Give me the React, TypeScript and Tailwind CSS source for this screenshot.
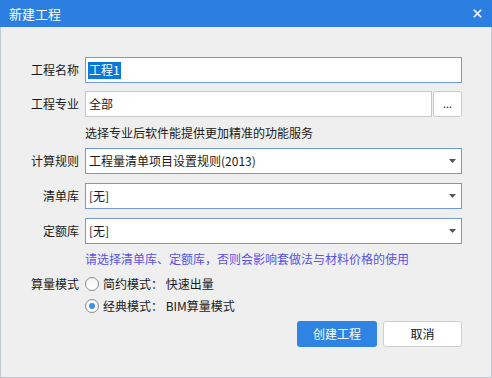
import React from "react";

const font = { fontFamily: '"Noto Sans CJK SC", "Microsoft YaHei", sans-serif' };

function Caret() {
  return (
    <svg width="7" height="4" viewBox="0 0 7 4" className="shrink-0">
      <path d="M0 0H7L3.5 4Z" fill="#555" />
    </svg>
  );
}

function Combo({ value }: { value: string }) {
  return (
    <div className="h-[26px] flex items-center justify-between bg-white border border-[#6f98e0] pl-[3px] pr-[5px]">
      <span className="text-[12px] text-[#1a1a1a] leading-none">{value}</span>
      <Caret />
    </div>
  );
}

function Label({ text }: { text: string }) {
  return <div className="text-right text-[12px] text-[#1a1a1a] leading-none self-center">{text}</div>;
}

function Radio({ checked, label }: { checked?: boolean; label: string }) {
  return (
    <div className="h-[22px] flex items-center gap-[4px]">
      <span className="w-[14px] h-[14px] rounded-full border border-[#8a8a8a] bg-gradient-to-b from-[#f4f4f4] to-white flex items-center justify-center">
        {checked && <span className="w-[6px] h-[6px] rounded-full bg-[#3b8eea]" />}
      </span>
      <span className="text-[12px] text-[#1a1a1a] leading-none">{label}</span>
    </div>
  );
}

export default function App() {
  return (
    <div className="w-[492px] h-[378px] flex flex-col select-none" style={font}>
      {/* title bar */}
      <div className="h-[27px] shrink-0 bg-[#2c7fe1] flex items-center justify-between pl-[9px] pr-[10px]">
        <span className="text-white text-[13px] leading-none">新建工程</span>
        <svg width="9" height="9" viewBox="0 0 9 9">
          <path d="M0.8 0.8L8.2 8.2M8.2 0.8L0.8 8.2" stroke="#fff" strokeWidth="1.6" />
        </svg>
      </div>

      {/* body */}
      <div className="flex-1 bg-[#efefef] border-x border-b border-[#c2c9d2] pt-[30px] pr-[29px]">
        <div className="grid grid-cols-[78px_1fr] gap-x-[6px]">
          <Label text="工程名称" />
          <div className="h-[26px] flex items-center bg-white border border-[#6f98e0] pl-[2px]">
            <span className="h-[17px] flex items-center bg-[#0a78d7] text-white text-[12px] leading-none px-[1px]">工程1</span>
          </div>

          <div className="col-span-2 h-[8px]" />

          <Label text="工程专业" />
          <div className="flex gap-[1px]">
            <div className="flex-1 h-[26px] flex items-center bg-white border border-[#c8c8c8] pl-[3px] text-[12px] text-[#1a1a1a] leading-none">
              全部
            </div>
            <button className="w-[29px] h-[26px] bg-white border border-[#cbcbcb] rounded-[3px] text-[11px] leading-none text-[#222] flex items-center justify-center pb-[2px]">
              ...
            </button>
          </div>

          <div />
          <div className="h-[31px] flex items-center text-[12px] text-[#1a1a1a] leading-none">
            选择专业后软件能提供更加精准的功能服务
          </div>

          <Label text="计算规则" />
          <Combo value="工程量清单项目设置规则(2013)" />

          <div className="col-span-2 h-[9px]" />

          <Label text="清单库" />
          <Combo value="[无]" />

          <div className="col-span-2 h-[9px]" />

          <Label text="定额库" />
          <Combo value="[无]" />

          <div />
          <div className="h-[29px] flex items-center text-[12px] text-[#5a52e6] leading-none">
            请选择清单库、定额库，否则会影响套做法与材料价格的使用
          </div>

          <div className="h-[22px] flex items-center justify-end text-[12px] text-[#1a1a1a] leading-none">算量模式</div>
          <Radio label="简约模式： 快速出量" />

          <div />
          <Radio checked label="经典模式： BIM算量模式" />
        </div>

        <div className="flex justify-end gap-[6px] mt-[4px]">
          <button className="w-[80px] h-[26px] rounded-[3px] bg-[#2f83e3] text-white text-[12px] leading-none">
            创建工程
          </button>
          <button className="w-[79px] h-[26px] rounded-[3px] bg-white border border-[#cfcfcf] text-[#111] text-[12px] leading-none">
            取消
          </button>
        </div>
      </div>
    </div>
  );
}
